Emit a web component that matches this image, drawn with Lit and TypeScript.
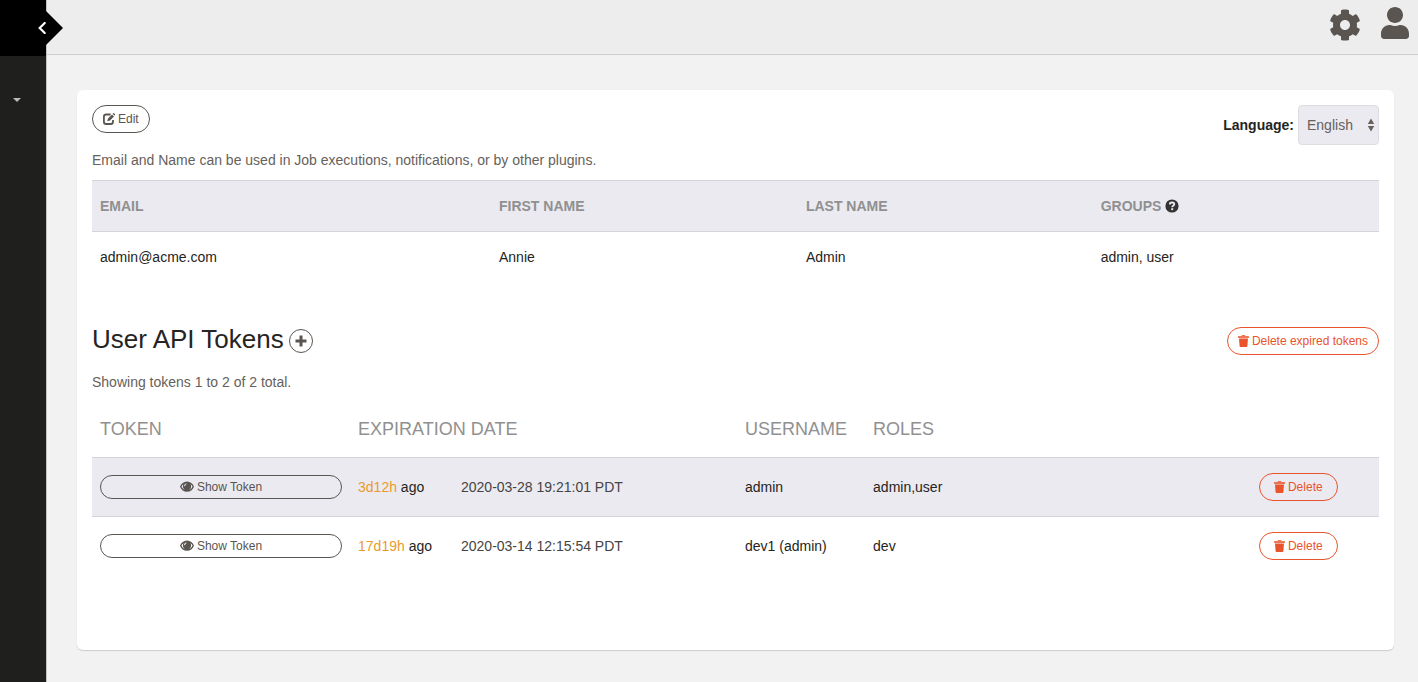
import { LitElement, html, css, svg } from "lit";
import { customElement, property, state } from "lit/decorators.js";

const shapes: Record<string, { box: string; body: unknown }> = {
  cog: {
    box: "0 0 512 512",
    body: svg`<path d="M487.4 315.7l-42.6-24.6c4.3-23.2 4.3-47 0-70.2l42.6-24.6c4.9-2.8 7.1-8.6 5.5-14-11.1-35.6-30-67.8-54.7-94.6-3.8-4.1-10-5.1-14.8-2.3L380.8 110c-17.9-15.4-38.5-27.3-60.8-35.1V25.8c0-5.6-3.9-10.5-9.4-11.7-36.7-8.2-74.3-7.8-109.2 0-5.5 1.2-9.4 6.1-9.4 11.7V75c-22.2 7.9-42.8 19.8-60.8 35.1L88.7 85.5c-4.9-2.8-11-1.9-14.8 2.3-24.7 26.7-43.6 58.9-54.7 94.6-1.7 5.4.6 11.2 5.5 14L67.3 221c-4.3 23.2-4.3 47 0 70.2l-42.6 24.6c-4.9 2.8-7.1 8.6-5.5 14 11.1 35.6 30 67.8 54.7 94.6 3.8 4.1 10 5.1 14.8 2.3l42.6-24.6c17.9 15.4 38.5 27.3 60.8 35.1v49.2c0 5.6 3.9 10.5 9.4 11.7 36.7 8.2 74.3 7.8 109.2 0 5.5-1.2 9.4-6.1 9.4-11.7v-49.2c22.2-7.9 42.8-19.8 60.8-35.1l42.6 24.6c4.9 2.8 11 1.9 14.8-2.3 24.7-26.7 43.6-58.9 54.7-94.6 1.5-5.5-.7-11.3-5.6-14.1zM256 336c-44.1 0-80-35.9-80-80s35.9-80 80-80 80 35.9 80 80-35.9 80-80 80z"/>`,
  },
  user: {
    box: "0 0 448 512",
    body: svg`<path d="M224 256c70.7 0 128-57.3 128-128S294.7 0 224 0 96 57.3 96 128s57.3 128 128 128zm89.6 32h-16.7c-22.2 10.2-46.9 16-72.9 16s-50.6-5.8-72.9-16h-16.7C60.2 288 0 348.2 0 422.4V464c0 26.5 21.5 48 48 48h352c26.5 0 48-21.5 48-48v-41.6c0-74.2-60.2-134.4-134.4-134.4z"/>`,
  },
  edit: {
    box: "0 0 12 12",
    body: svg`<path d="M7.6 1.5H3.2Q.9 1.5.9 3.8V8.7Q.9 11 3.2 11H7.7Q10 11 10 8.7V7" fill="none" stroke="currentColor" stroke-width="1.8"/><path d="M4.200 8.300l.8-2.900L9 1.400l2 2-4 4zM9.600.8l.6-.6q.5-.3.9.1l.9.9q.3.4 0 .8l-.5.6z"/>`,
  },
  plus: { box: "0 0 12 12", body: svg`<path d="M4.5.5h3v4h4v3h-4v4h-3v-4h-4v-3h4z"/>` },
  trash: {
    box: "0 0 11 12",
    body: svg`<path d="M0 3V1.700q0-.6.600-.6H3.500Q3.600.1 4.500.1h2q.9 0 1 1h2.900q.6 0 .6.600V3z" opacity=".8"/><path d="M1 3.500h9l-.6 7.500q-.1 1-1 1H2.600q-.9 0-1-1z"/>`,
  },
  eye: {
    box: "0 0 14 12",
    body: svg`<path fill-rule="evenodd" d="M7 .6C10.200.6 12.900 2.700 14 5.700 12.900 8.700 10.200 10.800 7 10.800S1.100 8.700 0 5.700C1.100 2.700 3.800.6 7 .6zM3.500 3.300C2.500 3.900 1.800 4.700 1.500 5.700 2.500 8 4.700 9.300 7 9.300S11.500 8 12.500 5.700c-.3-1-1-1.800-2-2.400.4.600.6 1.200.6 2a4.100 4 0 0 1-8.200 0c0-.8.2-1.400.6-2zM6.300 2.500c-1.400.2-2.300 1.300-2.100 2.800.8 0 1.100-.4 1.200-1.100.1-.6.500-.9 1.100-1z"/>`,
  },
  question: {
    box: "0 0 14 14",
    body: svg`<circle cx="7" cy="7" r="6.600"/><path d="M4.900 5.500V4.800Q4.900 3.500 7.100 3.500T9.300 5.100Q9.300 6.300 8.100 6.800 7.200 7.200 7.200 8.300" fill="none" stroke="#ebeaf0" stroke-width="1.800"/><path d="M6.200 9.200h2v1.900h-2z" fill="#ebeaf0"/>`,
  },
  chevron: {
    box: "0 0 8 12",
    body: svg`<path d="M6.700 1L1.700 6l5 5" fill="none" stroke="currentColor" stroke-width="2.200" stroke-linecap="round"/>`,
  },
  sort: { box: "0 0 8 14", body: svg`<path d="M4 .6L7.200 6H.8zM4 13.400L.8 8h6.400z"/>` },
  caret: { box: "0 0 8 4", body: svg`<path d="M0 0h8L4 4z"/>` },
};

const icon = (name: string) =>
  html`<svg class="icon ${name}" viewBox=${shapes[name].box} fill="currentColor" aria-hidden="true">${shapes[name].body}</svg>`;

interface Token {
  age: string;
  date: string;
  username: string;
  roles: string;
}

const shared = css`
  :host {
    display: block;
  }
  .icon {
    display: block;
    flex: none;
  }
  button {
    font: inherit;
    color: inherit;
    background: none;
    border: 0;
    margin: 0;
    padding: 0;
    cursor: pointer;
  }
  .pill {
    display: inline-flex;
    align-items: center;
    justify-content: center;
    gap: 3px;
    height: 28px;
    padding: 0 10px;
    border: 1px solid #5a5550;
    border-radius: 14px;
    font-size: 12px;
    line-height: 16px;
    color: #5a5550;
    white-space: nowrap;
    box-sizing: border-box;
  }
  .danger {
    color: #e9542c;
    border-color: #e9542c;
  }
  .roomy {
    padding: 0 14px;
  }
  .edit {
    width: 12px;
    height: 12px;
  }
  .trash {
    width: 11px;
    height: 12px;
  }
  .muted {
    margin: 0;
    color: #66615b;
    line-height: 20px;
  }
  table {
    width: 100%;
    border-collapse: collapse;
    table-layout: fixed;
  }
  th,
  td {
    padding: 0 8px;
    text-align: left;
    box-sizing: border-box;
    line-height: 20px;
  }
  th {
    color: #909090;
  }
`;

@customElement("profile-panel")
class ProfilePanel extends LitElement {
  static styles = [
    shared,
    css`
      .bar {
        display: flex;
        justify-content: space-between;
        align-items: flex-start;
        margin-bottom: 5px;
      }
      .language {
        display: flex;
        align-items: center;
        gap: 4px;
        font-weight: bold;
      }
      .choice {
        display: grid;
        align-items: center;
      }
      .choice > * {
        grid-area: 1 / 1;
      }
      select {
        appearance: none;
        height: 40px;
        width: 81px;
        padding: 0 8px;
        font: inherit;
        font-weight: normal;
        color: #66615b;
        background: #ebeaf0;
        border: 1px solid #dddce0;
        border-radius: 4px;
      }
      .sort {
        width: 8px;
        height: 14px;
        justify-self: end;
        margin-right: 4px;
        color: #66615b;
        pointer-events: none;
      }
      table {
        margin-top: 10px;
      }
      th {
        height: 51px;
        background: #ebeaf0;
        border-top: 1px solid #d5d4d8;
        border-bottom: 1px solid #d5d4d8;
      }
      td {
        height: 51px;
      }
      .email {
        width: 31%;
      }
      .first {
        width: 23.85%;
      }
      .last {
        width: 22.9%;
      }
      .help {
        display: flex;
        align-items: center;
        gap: 4px;
      }
      .question {
        width: 14px;
        height: 14px;
        color: #333;
      }
    `,
  ];

  render() {
    return html`
      <div class="bar">
        <button class="pill">${icon("edit")}<span>Edit</span></button>
        <div class="language">
          <label for="language">Language:</label>
          <span class="choice">
            <select id="language"><option>English</option></select>
            ${icon("sort")}
          </span>
        </div>
      </div>
      <p class="muted">Email and Name can be used in Job executions, notifications, or by other plugins.</p>
      <table>
        <thead>
          <tr>
            <th class="email">EMAIL</th>
            <th class="first">FIRST NAME</th>
            <th class="last">LAST NAME</th>
            <th><span class="help">GROUPS ${icon("question")}</span></th>
          </tr>
        </thead>
        <tbody>
          <tr>
            <td>admin@acme.com</td>
            <td>Annie</td>
            <td>Admin</td>
            <td>admin, user</td>
          </tr>
        </tbody>
      </table>
    `;
  }
}

@customElement("token-list")
class TokenList extends LitElement {
  @property({ attribute: false }) tokens: Token[] = [];

  static styles = [
    shared,
    css`
      .bar {
        display: flex;
        justify-content: space-between;
        align-items: center;
      }
      .title {
        display: flex;
        align-items: center;
        gap: 5px;
      }
      h2 {
        margin: 0;
        padding-bottom: 4px;
        font-size: 26px;
        line-height: 32px;
        font-weight: normal;
      }
      .add {
        display: grid;
        place-items: center;
        width: 24px;
        height: 24px;
        border: 1px solid #5a5550;
        border-radius: 50%;
        color: #5a5550;
      }
      .plus {
        width: 12px;
        height: 12px;
      }
      .muted {
        margin-top: 13px;
      }
      table {
        margin-top: 9px;
      }
      th {
        height: 57px;
        font-size: 18px;
        font-weight: normal;
        white-space: nowrap;
      }
      td {
        height: 59px;
      }
      tbody tr:nth-child(odd) td {
        background: #ebeaf0;
        border-top: 1px solid #d5d4d8;
        border-bottom: 1px solid #d5d4d8;
      }
      .token {
        width: 20.05%;
      }
      .age {
        width: 8%;
      }
      .date {
        width: 22.07%;
      }
      .username {
        width: 9.95%;
      }
      .actions {
        width: 9.95%;
      }
      .show {
        width: 100%;
        height: 24px;
      }
      .eye {
        width: 14px;
        height: 12px;
      }
      .expired {
        color: #eb9a2a;
      }
      .stamp {
        color: #444;
      }
    `,
  ];

  render() {
    return html`
      <div class="bar">
        <div class="title">
          <h2>User API Tokens</h2>
          <button class="add" aria-label="Add token">${icon("plus")}</button>
        </div>
        <button class="pill danger">${icon("trash")}<span>Delete expired tokens</span></button>
      </div>
      <p class="muted">Showing tokens 1 to 2 of 2 total.</p>
      <table>
        <colgroup>
          <col class="token" /><col class="age" /><col class="date" /><col class="username" /><col /><col class="actions" />
        </colgroup>
        <thead>
          <tr>
            <th>TOKEN</th>
            <th colspan="2">EXPIRATION DATE</th>
            <th>USERNAME</th>
            <th colspan="2">ROLES</th>
          </tr>
        </thead>
        <tbody>
          ${this.tokens.map(
            (t) => html`<tr>
              <td><button class="pill show">${icon("eye")}<span>Show Token</span></button></td>
              <td><span class="expired">${t.age}</span> ago</td>
              <td class="stamp">${t.date}</td>
              <td>${t.username}</td>
              <td>${t.roles}</td>
              <td><button class="pill danger roomy">${icon("trash")}<span>Delete</span></button></td>
            </tr>`
          )}
        </tbody>
      </table>
    `;
  }
}

@customElement("app-root")
class AppRoot extends LitElement {
  @state() private tokens: Token[] = [
    { age: "3d12h", date: "2020-03-28 19:21:01 PDT", username: "admin", roles: "admin,user" },
    { age: "17d19h", date: "2020-03-14 12:15:54 PDT", username: "dev1 (admin)", roles: "dev" },
  ];

  static styles = [
    shared,
    css`
      :host {
        font: 14px/20px "Liberation Sans", Arial, sans-serif;
        color: #252422;
      }
      .layout {
        display: grid;
        grid-template-columns: 47px 1fr;
        min-height: 100vh;
        background: #f2f2f2;
      }
      .side {
        background: #1f1f1d;
        border-right: 1px solid #c4c2be;
      }
      .brand {
        position: relative;
        display: flex;
        align-items: center;
        justify-content: flex-end;
        height: 56px;
        background: #000;
        color: #fff;
      }
      .notch {
        position: absolute;
        left: 100%;
        top: 11px;
        width: 17px;
        height: 34px;
        background: #000;
        clip-path: polygon(0 0, 100% 50%, 0 100%);
      }
      .chevron {
        width: 8px;
        height: 12px;
      }
      .caret {
        width: 8px;
        height: 4px;
        color: #bbb;
      }
      .menu {
        display: block;
        padding: 42px 13px 8px;
      }
      .top {
        display: flex;
        justify-content: flex-end;
        gap: 20px;
        height: 54px;
        padding-right: 9px;
        background: #ededed;
        border-bottom: 1px solid #cfcfcf;
        color: #5a5550;
      }
      .top button {
        align-self: flex-start;
      }
      .cog {
        width: 32px;
        height: 32px;
        margin-top: 9px;
      }
      .user {
        width: 28px;
        height: 32px;
        margin-top: 7px;
      }
      .card {
        margin: 35px 24px 31px 30px;
        padding: 15px 15px 74px;
        background: #fff;
        border-radius: 6px;
        box-shadow: 0 1px 1px #ccc;
      }
      token-list {
        margin-top: 40px;
      }
    `,
  ];

  render() {
    return html`
      <div class="layout">
        <nav class="side">
          <div class="brand">
            <span class="notch"></span>
            <button aria-label="Collapse menu">${icon("chevron")}</button>
          </div>
          <button class="menu" aria-label="Projects">${icon("caret")}</button>
        </nav>
        <div>
          <header class="top">
            <button aria-label="Settings">${icon("cog")}</button>
            <button aria-label="Profile">${icon("user")}</button>
          </header>
          <main class="card">
            <profile-panel></profile-panel>
            <token-list .tokens=${this.tokens}></token-list>
          </main>
        </div>
      </div>
    `;
  }
}
